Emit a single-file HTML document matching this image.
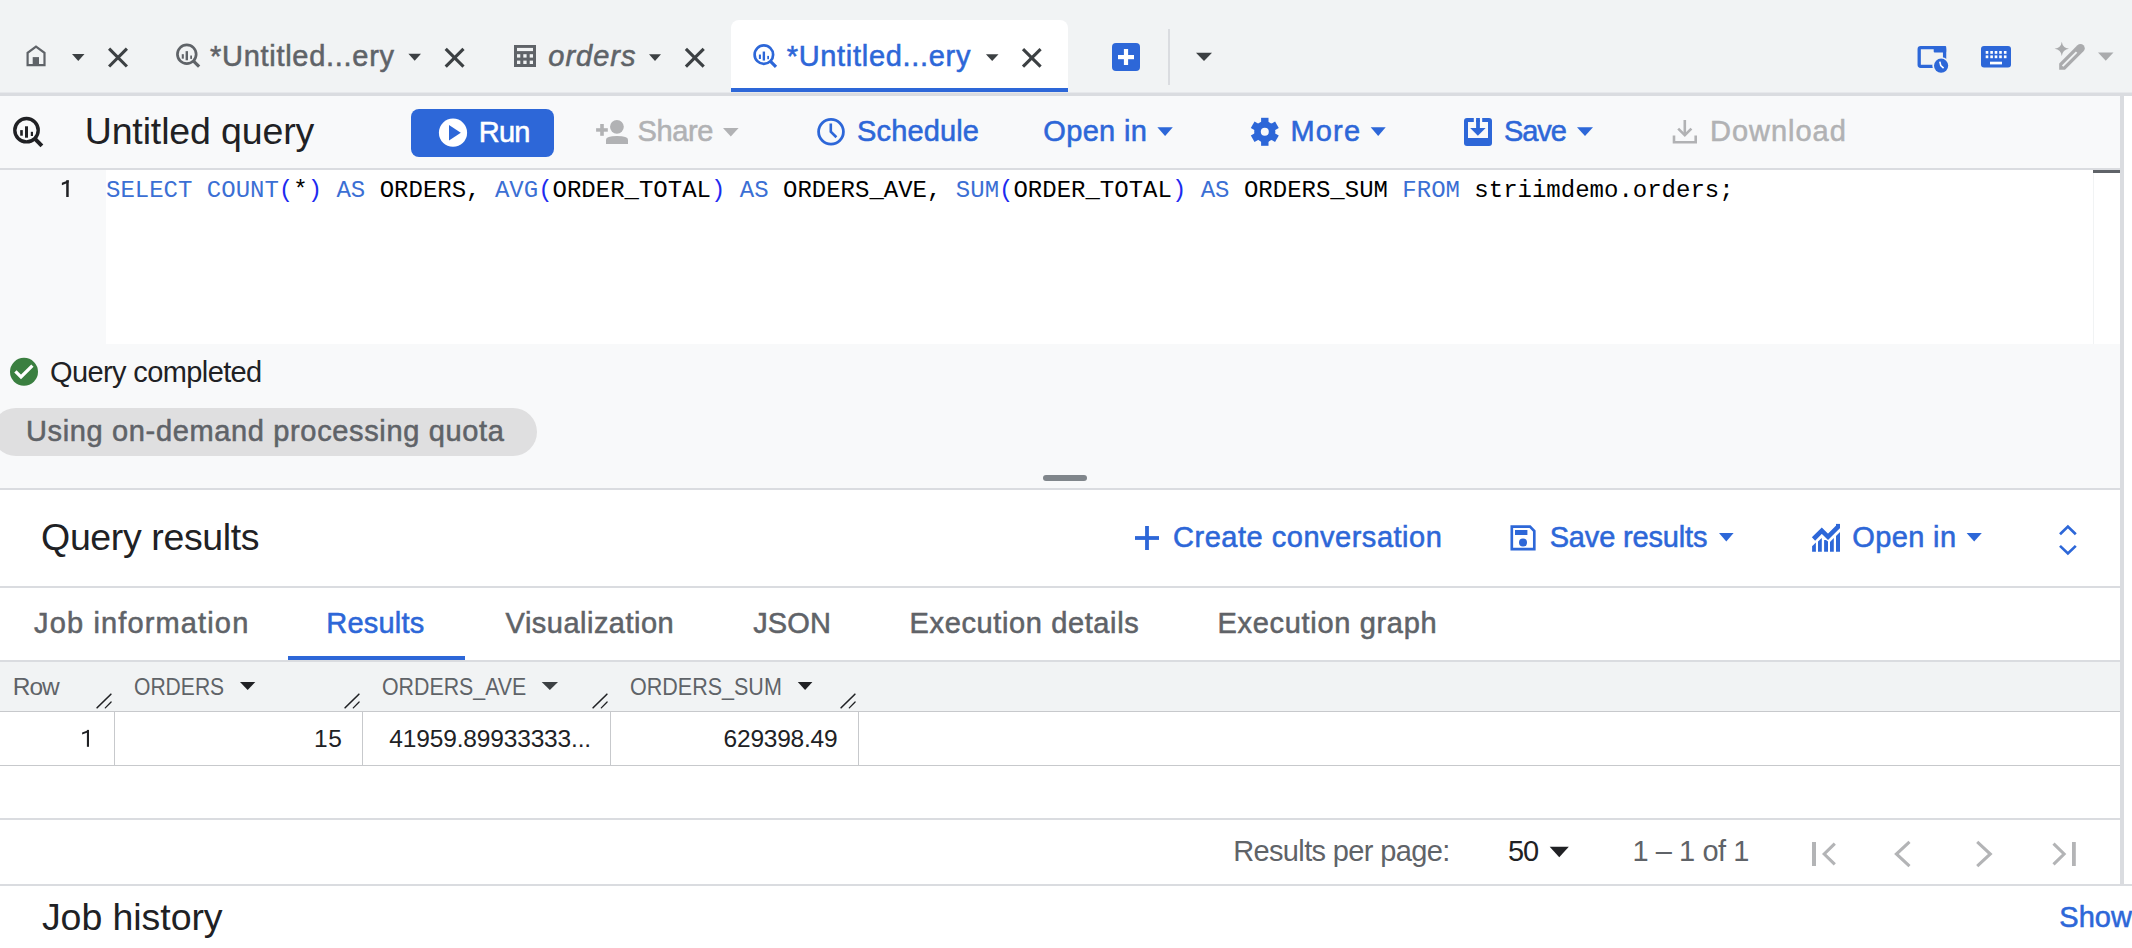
<!DOCTYPE html>
<html><head><meta charset="utf-8"><title>BigQuery</title>
<style>
html,body{margin:0;padding:0;width:2132px;height:948px;overflow:hidden;background:#fff;}
#root{position:relative;width:2132px;height:948px;overflow:hidden;}
#root>div,#root>span{position:absolute;}
#root>span{line-height:1;white-space:pre;}
</style></head><body><div id="root">
<div style="left:0px;top:0px;width:2132px;height:93px;background:#f1f3f4;"></div>
<div style="left:0px;top:92px;width:2132px;height:1px;background:#e6e8eb;"></div>
<div style="left:0px;top:93px;width:2132px;height:3px;background:#dadce0;"></div>
<div style="left:731px;top:20px;width:337px;height:68px;background:#ffffff;border-radius:8px 8px 0 0;"></div>
<div style="left:731px;top:88px;width:337px;height:4px;background:#2d67d8;"></div>
<div style="left:0px;top:96px;width:2120px;height:72px;background:#f8f9fa;"></div>
<div style="left:0px;top:168px;width:2120px;height:2px;background:#dadce0;"></div>
<div style="left:0px;top:170px;width:106px;height:174px;background:#f8f9fa;"></div>
<div style="left:106px;top:170px;width:2014px;height:174px;background:#ffffff;"></div>
<div style="left:2093px;top:170px;width:1px;height:174px;background:#f1f3f4;"></div>
<div style="left:2093px;top:170px;width:27px;height:3px;background:#5f6368;"></div>
<div style="left:0px;top:344px;width:2120px;height:144px;background:#f8f9fa;"></div>
<div style="left:-8px;top:408px;width:545px;height:48px;background:#dfdfe0;border-radius:24px;"></div>
<div style="left:1043px;top:475px;width:44px;height:6px;background:#80868b;border-radius:3px;"></div>
<div style="left:0px;top:488px;width:2120px;height:2px;background:#dadce0;"></div>
<div style="left:0px;top:490px;width:2120px;height:96px;background:#ffffff;"></div>
<div style="left:0px;top:586px;width:2120px;height:2px;background:#dadce0;"></div>
<div style="left:288px;top:656px;width:177px;height:4px;background:#2d67d8;"></div>
<div style="left:0px;top:660px;width:2120px;height:2px;background:#dadce0;"></div>
<div style="left:0px;top:662px;width:2120px;height:49px;background:#f1f3f4;"></div>
<div style="left:0px;top:711px;width:2120px;height:1px;background:#c7c9cc;"></div>
<div style="left:114px;top:712px;width:1px;height:53px;background:#c7c9cc;"></div>
<div style="left:362px;top:712px;width:1px;height:53px;background:#c7c9cc;"></div>
<div style="left:610px;top:712px;width:1px;height:53px;background:#c7c9cc;"></div>
<div style="left:858px;top:712px;width:1px;height:53px;background:#c7c9cc;"></div>
<div style="left:0px;top:765px;width:2120px;height:1px;background:#c7c9cc;"></div>
<div style="left:0px;top:818px;width:2120px;height:2px;background:#dadce0;"></div>
<div style="left:0px;top:884px;width:2132px;height:2px;background:#dadce0;"></div>
<div style="left:2120px;top:96px;width:4px;height:788px;background:#dadce0;"></div>
<svg width="2132" height="948" viewBox="0 0 2132 948" style="position:absolute;left:0;top:0"><g fill="none" stroke="#5f6368" stroke-width="2.2" stroke-linejoin="miter"><path d="M27.6,65.2 V52.8 L36,46.6 L44.5,52.8 V65.2 Z"/></g><rect x="32.7" y="57.1" width="6.3" height="8.2" fill="#5f6368"/><polygon points="72,54 84.5,54 78.25,61" fill="#3c4043"/><g stroke="#3c4043" stroke-width="3.1"><line x1="109.1" y1="48.7" x2="126.9" y2="66.5"/><line x1="126.9" y1="48.7" x2="109.1" y2="66.5"/></g><g transform="translate(176,43.7) scale(0.8)" fill="none" stroke="#5f6368"><circle cx="13.5" cy="13.2" r="11.7" stroke-width="3.4"/><line x1="21.3" y1="21.2" x2="28.9" y2="28.8" stroke-width="4"/><g stroke="none" fill="#5f6368"><rect x="12" y="9.3" width="3" height="11.4"/><rect x="7.2" y="13.1" width="2.6" height="5.6"/><rect x="17.8" y="14.8" width="2.2" height="4.2"/></g></g><polygon points="408.4,53.8 421,53.8 414.7,60.8" fill="#3c4043"/><g stroke="#3c4043" stroke-width="3.1"><line x1="445.70000000000005" y1="48.9" x2="463.5" y2="66.7"/><line x1="463.5" y1="48.9" x2="445.70000000000005" y2="66.7"/></g><rect x="514" y="45" width="22" height="22" fill="#5f6368"/><rect x="517" y="47.9" width="16" height="3.2" fill="#f1f3f4"/><rect x="517" y="54.2" width="3.3" height="3.4" fill="#f1f3f4"/><rect x="523.3" y="54.2" width="3.3" height="3.4" fill="#f1f3f4"/><rect x="529.7" y="54.2" width="3.3" height="3.4" fill="#f1f3f4"/><rect x="517" y="60.6" width="3.3" height="3.4" fill="#f1f3f4"/><rect x="523.3" y="60.6" width="3.3" height="3.4" fill="#f1f3f4"/><rect x="529.7" y="60.6" width="3.3" height="3.4" fill="#f1f3f4"/><polygon points="649,54.3 661,54.3 655.0,61" fill="#3c4043"/><g stroke="#3c4043" stroke-width="3.1"><line x1="685.9" y1="48.9" x2="703.6999999999999" y2="66.7"/><line x1="703.6999999999999" y1="48.9" x2="685.9" y2="66.7"/></g><g transform="translate(753.2,44.2) scale(0.79)" fill="none" stroke="#2d67d8"><circle cx="13.5" cy="13.2" r="11.7" stroke-width="3.4"/><line x1="21.3" y1="21.2" x2="28.9" y2="28.8" stroke-width="4"/><g stroke="none" fill="#2d67d8"><rect x="12" y="9.3" width="3" height="11.4"/><rect x="7.2" y="13.1" width="2.6" height="5.6"/><rect x="17.8" y="14.8" width="2.2" height="4.2"/></g></g><polygon points="985.9,54.3 998.5,54.3 992.2,61" fill="#3c4043"/><g stroke="#3c4043" stroke-width="3.1"><line x1="1023.0" y1="49.1" x2="1040.6000000000001" y2="66.7"/><line x1="1040.6000000000001" y1="49.1" x2="1023.0" y2="66.7"/></g><rect x="1112" y="43" width="28" height="28" rx="4" fill="#2d67d8"/><rect x="1118" y="55" width="16" height="4.2" fill="#fff"/><rect x="1123.9" y="49" width="4.2" height="16" fill="#fff"/><rect x="1168" y="29" width="2" height="56" fill="#dadce0"/><polygon points="1196,52.7 1212,52.7 1204.0,61" fill="#3c4043"/><rect x="1919.2" y="47.7" width="25.4" height="18.6" rx="1.5" fill="none" stroke="#2d67d8" stroke-width="3.3"/><rect x="1933.7" y="46.1" width="12.5" height="6.5" rx="1" fill="#2d67d8"/><circle cx="1941.1" cy="65.7" r="8.8" fill="#f1f3f4"/><circle cx="1941.1" cy="65.7" r="7.1" fill="#2d67d8"/><path d="M1939.8,61.6 L1940.8,65.6 L1943.6,68.2" fill="none" stroke="#fff" stroke-width="1.6"/><rect x="1981" y="46" width="30" height="21.5" rx="3" fill="#2d67d8"/><rect x="1985.7" y="51" width="2.6" height="2.8" fill="#fff"/><rect x="1990.3" y="51" width="2.6" height="2.8" fill="#fff"/><rect x="1994.7" y="51" width="2.6" height="2.8" fill="#fff"/><rect x="1999.2" y="51" width="2.6" height="2.8" fill="#fff"/><rect x="2003.9" y="51" width="2.6" height="2.8" fill="#fff"/><rect x="1985.7" y="55.4" width="2.6" height="2.8" fill="#fff"/><rect x="1990.3" y="55.4" width="2.6" height="2.8" fill="#fff"/><rect x="1994.7" y="55.4" width="2.6" height="2.8" fill="#fff"/><rect x="1999.2" y="55.4" width="2.6" height="2.8" fill="#fff"/><rect x="2003.9" y="55.4" width="2.6" height="2.8" fill="#fff"/><rect x="1990" y="61.7" width="12" height="2.7" fill="#fff"/><path d="M2061.8,41.8 Q2062.6,48 2069,48.8 Q2062.6,49.6 2061.8,56 Q2061,49.6 2054.6,48.8 Q2061,48 2061.8,41.8 Z" fill="#aaabad"/><path d="M2059.2,69.8 V63.4 L2077.4,45.2 A4.3,4.3 0 0 1 2083.5,51.3 L2065,69.8 Z" fill="#aaabad"/><line x1="2062.6" y1="66.1" x2="2076.6" y2="52.1" stroke="#f1f3f4" stroke-width="2"/><polygon points="2098,52.6 2113.5,52.6 2105.75,60.8" fill="#aaabad"/><g transform="translate(13,117) scale(1.0)" fill="none" stroke="#202124"><circle cx="13.5" cy="13.2" r="11.7" stroke-width="3.4"/><line x1="21.3" y1="21.2" x2="28.9" y2="28.8" stroke-width="4"/><g stroke="none" fill="#202124"><rect x="12" y="9.3" width="3" height="11.4"/><rect x="7.2" y="13.1" width="2.6" height="5.6"/><rect x="17.8" y="14.8" width="2.2" height="4.2"/></g></g><rect x="411" y="109" width="143" height="48" rx="8" fill="#2d67d8"/><circle cx="453" cy="132.7" r="14.1" fill="#fff"/><polygon points="449,125 449,140.6 460.8,132.8" fill="#2d67d8"/><g fill="#b1b2b4"><rect x="596.1" y="128.2" width="11.7" height="3.5"/><rect x="600.2" y="124" width="3.6" height="11.8"/><circle cx="616.9" cy="126.8" r="6.9"/><path d="M606,144 V139.5 Q606,136 617,136 Q628,136 628,139.5 V144 Z"/></g><polygon points="723,128 738.6,128 730.8,136.4" fill="#b1b2b4"/><g fill="none" stroke="#2d67d8" stroke-width="2.8"><circle cx="831" cy="131.8" r="12.4"/></g><path d="M830.8,123.5 V131.8 L836.4,137.2" fill="none" stroke="#2d67d8" stroke-width="2.6"/><polygon points="1157.4,127.3 1172.8,127.3 1165.1,136" fill="#2d67d8"/><g fill="#2d67d8"><circle cx="1264.8" cy="131.8" r="10.6"/><rect x="1261.1" y="117.80000000000001" width="7.4" height="14" transform="rotate(0 1264.8 131.8)"/><rect x="1261.1" y="117.80000000000001" width="7.4" height="14" transform="rotate(60 1264.8 131.8)"/><rect x="1261.1" y="117.80000000000001" width="7.4" height="14" transform="rotate(120 1264.8 131.8)"/><rect x="1261.1" y="117.80000000000001" width="7.4" height="14" transform="rotate(180 1264.8 131.8)"/><rect x="1261.1" y="117.80000000000001" width="7.4" height="14" transform="rotate(240 1264.8 131.8)"/><rect x="1261.1" y="117.80000000000001" width="7.4" height="14" transform="rotate(300 1264.8 131.8)"/></g><circle cx="1264.8" cy="131.8" r="4" fill="#f8f9fa"/><polygon points="1370.7,127.3 1385.7,127.3 1378.2,136" fill="#2d67d8"/><rect x="1464" y="118" width="28" height="28" rx="3" fill="#2d67d8"/><rect x="1468" y="122" width="20" height="16" fill="#f8f9fa"/><rect x="1473.8" y="118" width="2.3" height="4" fill="#f8f9fa"/><rect x="1479.9" y="118" width="2.3" height="4" fill="#f8f9fa"/><rect x="1476.1" y="120" width="3.8" height="9" fill="#2d67d8"/><polygon points="1470.2,128 1485.6,128 1477.9,135.8" fill="#2d67d8"/><polygon points="1577,127.3 1593,127.3 1585.0,136" fill="#2d67d8"/><g fill="none" stroke="#b1b2b4" stroke-width="2.6"><path d="M1684.8,120 V135"/><path d="M1678.2,128.6 L1684.8,135.2 L1691.4,128.6"/><path d="M1674,135.5 V142.3 H1695.7 V135.5"/></g><g fill="#202124"><rect x="66.2" y="180.2" width="2.5" height="16.8"/><polygon points="61.9,182.8 68.7,180.2 68.7,182.6 61.9,185.2"/><rect x="86.9" y="729.9" width="2.1" height="16.9"/><polygon points="82.1,732.4 88.9,729.9 88.9,732.1 82.1,734.5"/></g><circle cx="24" cy="371.8" r="14" fill="#3a7f40"/><polyline points="15.4,371.4 21,376.9 32.4,365.6" fill="none" stroke="#fff" stroke-width="3.3"/><rect x="1135" y="536.1" width="24" height="3.8" fill="#2d67d8"/><rect x="1145.1" y="526" width="3.8" height="24" fill="#2d67d8"/><path d="M1511.8,526.6 H1530 L1534.3,531 V549.1 H1511.8 Z" fill="none" stroke="#2d67d8" stroke-width="2.66"/><rect x="1515" y="530" width="12.4" height="5" fill="#2d67d8"/><circle cx="1523" cy="542.4" r="4" fill="#2d67d8"/><polygon points="1719,533 1733.6,533 1726.3,541.6" fill="#2d67d8"/><polyline points="1813.5,539 1821.8,530.7 1828,536.8 1838.5,526.3" fill="none" stroke="#2d67d8" stroke-width="4.6" stroke-linejoin="miter"/><polygon points="1836,523.9 1840,523.9 1840,528 1836,528" fill="#2d67d8"/><g fill="#2d67d8"><polygon points="1812.1,546.3 1815.9,542.5 1815.9,551.8 1812.1,551.8"/><polygon points="1818,541.6 1821.8,538 1821.8,551.8 1818,551.8"/><polygon points="1824.1,540 1826,540 1828,541.6 1828,551.8 1824.1,551.8"/><polygon points="1830,542 1833.8,538 1833.8,551.8 1830,551.8"/><polygon points="1836,536 1840,532.1 1840,551.8 1836,551.8"/></g><polygon points="1966.6,533 1981.8,533 1974.1999999999998,541.6" fill="#2d67d8"/><g fill="none" stroke="#2d67d8" stroke-width="2.7"><polyline points="2060,534.2 2067.9,526.6 2075.8,534.2"/><polyline points="2060,545.9 2067.9,553.5 2075.8,545.9"/></g><g stroke="#202124" stroke-linecap="round"><line x1="97.1" y1="707.8" x2="110.9" y2="694.2" stroke-width="1.6"/><line x1="105.3" y1="707.9" x2="111.1" y2="702" stroke-width="1.3"/></g><g stroke="#202124" stroke-linecap="round"><line x1="345.1" y1="707.8" x2="358.9" y2="694.2" stroke-width="1.6"/><line x1="353.3" y1="707.9" x2="359.1" y2="702" stroke-width="1.3"/></g><g stroke="#202124" stroke-linecap="round"><line x1="593.1" y1="707.8" x2="606.9" y2="694.2" stroke-width="1.6"/><line x1="601.3" y1="707.9" x2="607.1" y2="702" stroke-width="1.3"/></g><g stroke="#202124" stroke-linecap="round"><line x1="841.1" y1="707.8" x2="854.9" y2="694.2" stroke-width="1.6"/><line x1="849.3" y1="707.9" x2="855.1" y2="702" stroke-width="1.3"/></g><polygon points="240,682 255.3,682 247.65,690" fill="#202124"/><polygon points="541.7,682 558,682 549.85,690" fill="#3c4043"/><polygon points="797.8,682 812.4,682 805.0999999999999,690" fill="#202124"/><polygon points="1549.7,846.8 1568.8,846.8 1559.25,857.3" fill="#202124"/><g fill="none" stroke="#b3b4b6" stroke-width="3.1"><polyline points="1834.8,843.6 1824.2,854 1834.8,864.4"/><polyline points="1909.5,841.8 1896.4,854 1909.5,866.2"/><polyline points="1977.2,841.8 1990.3,854 1977.2,866.2"/><polyline points="2053.5,843.6 2064.1,854 2053.5,864.4"/></g><rect x="1812" y="842" width="4" height="24" fill="#b3b4b6"/><rect x="2072" y="842" width="3.8" height="24" fill="#b3b4b6"/></svg>
<span style="left:210.00px;top:42.05px;font-family:'Liberation Sans',sans-serif;font-size:29px;font-style:normal;color:#5f6368;letter-spacing:0.714px;-webkit-text-stroke:0.55px #5f6368;">*Untitled...ery</span>
<span style="left:548.30px;top:42.35px;font-family:'Liberation Sans',sans-serif;font-size:29px;font-style:italic;color:#5f6368;letter-spacing:1.0px;-webkit-text-stroke:0.55px #5f6368;">orders</span>
<span style="left:786.70px;top:42.35px;font-family:'Liberation Sans',sans-serif;font-size:29px;font-style:normal;color:#2d67d8;letter-spacing:0.693px;-webkit-text-stroke:0.55px #2d67d8;">*Untitled...ery</span>
<span style="left:84.70px;top:112.83px;font-family:'Liberation Sans',sans-serif;font-size:37.5px;font-style:normal;color:#202124;letter-spacing:-0.131px;">Untitled query</span>
<span style="left:478.70px;top:118.05px;font-family:'Liberation Sans',sans-serif;font-size:29px;font-style:normal;color:#ffffff;letter-spacing:-0.7px;-webkit-text-stroke:0.55px #ffffff;">Run</span>
<span style="left:637.50px;top:117.05px;font-family:'Liberation Sans',sans-serif;font-size:29px;font-style:normal;color:#b1b2b4;letter-spacing:-0.375px;-webkit-text-stroke:0.55px #b1b2b4;">Share</span>
<span style="left:857.00px;top:117.05px;font-family:'Liberation Sans',sans-serif;font-size:29px;font-style:normal;color:#2d67d8;letter-spacing:0.143px;-webkit-text-stroke:0.55px #2d67d8;">Schedule</span>
<span style="left:1043.30px;top:117.05px;font-family:'Liberation Sans',sans-serif;font-size:29px;font-style:normal;color:#2d67d8;letter-spacing:0.333px;-webkit-text-stroke:0.55px #2d67d8;">Open in</span>
<span style="left:1290.50px;top:117.05px;font-family:'Liberation Sans',sans-serif;font-size:29px;font-style:normal;color:#2d67d8;letter-spacing:1.167px;-webkit-text-stroke:0.55px #2d67d8;">More</span>
<span style="left:1503.90px;top:117.05px;font-family:'Liberation Sans',sans-serif;font-size:29px;font-style:normal;color:#2d67d8;letter-spacing:-1.0px;-webkit-text-stroke:0.55px #2d67d8;">Save</span>
<span style="left:1710.00px;top:117.45px;font-family:'Liberation Sans',sans-serif;font-size:29px;font-style:normal;color:#b1b2b4;letter-spacing:0.971px;-webkit-text-stroke:0.55px #b1b2b4;">Download</span>
<span style="left:50.00px;top:357.75px;font-family:'Liberation Sans',sans-serif;font-size:29px;font-style:normal;color:#202124;letter-spacing:-0.614px;">Query completed</span>
<span style="left:26.00px;top:417.05px;font-family:'Liberation Sans',sans-serif;font-size:29px;font-style:normal;color:#5f6368;letter-spacing:0.645px;-webkit-text-stroke:0.55px #5f6368;">Using on-demand processing quota</span>
<span style="left:41.10px;top:518.62px;font-family:'Liberation Sans',sans-serif;font-size:37.5px;font-style:normal;color:#202124;letter-spacing:-0.383px;">Query results</span>
<span style="left:1173.00px;top:523.45px;font-family:'Liberation Sans',sans-serif;font-size:29px;font-style:normal;color:#2d67d8;letter-spacing:0.517px;-webkit-text-stroke:0.55px #2d67d8;">Create conversation</span>
<span style="left:1549.70px;top:523.45px;font-family:'Liberation Sans',sans-serif;font-size:29px;font-style:normal;color:#2d67d8;letter-spacing:-0.164px;-webkit-text-stroke:0.55px #2d67d8;">Save results</span>
<span style="left:1852.20px;top:523.45px;font-family:'Liberation Sans',sans-serif;font-size:29px;font-style:normal;color:#2d67d8;letter-spacing:0.383px;-webkit-text-stroke:0.55px #2d67d8;">Open in</span>
<span style="left:34.00px;top:608.55px;font-family:'Liberation Sans',sans-serif;font-size:29px;font-style:normal;color:#5f6368;letter-spacing:1.143px;-webkit-text-stroke:0.55px #5f6368;">Job information</span>
<span style="left:326.30px;top:608.55px;font-family:'Liberation Sans',sans-serif;font-size:29px;font-style:normal;color:#2d67d8;letter-spacing:0.2px;-webkit-text-stroke:0.55px #2d67d8;">Results</span>
<span style="left:505.60px;top:608.55px;font-family:'Liberation Sans',sans-serif;font-size:29px;font-style:normal;color:#5f6368;letter-spacing:0.483px;-webkit-text-stroke:0.55px #5f6368;">Visualization</span>
<span style="left:753.20px;top:608.55px;font-family:'Liberation Sans',sans-serif;font-size:29px;font-style:normal;color:#5f6368;letter-spacing:0.1px;-webkit-text-stroke:0.55px #5f6368;">JSON</span>
<span style="left:909.60px;top:608.55px;font-family:'Liberation Sans',sans-serif;font-size:29px;font-style:normal;color:#5f6368;letter-spacing:0.619px;-webkit-text-stroke:0.55px #5f6368;">Execution details</span>
<span style="left:1217.60px;top:608.55px;font-family:'Liberation Sans',sans-serif;font-size:29px;font-style:normal;color:#5f6368;letter-spacing:0.671px;-webkit-text-stroke:0.55px #5f6368;">Execution graph</span>
<span style="left:12.80px;top:674.88px;font-family:'Liberation Sans',sans-serif;font-size:24.5px;font-style:normal;color:#5f6368;letter-spacing:-1.0px;">Row</span>
<span style="left:133.74px;top:674.88px;font-family:'Liberation Sans',sans-serif;font-size:24.5px;font-style:normal;color:#5f6368;letter-spacing:0px;transform:scaleX(0.8602);transform-origin:0 0;">ORDERS</span>
<span style="left:381.63px;top:674.88px;font-family:'Liberation Sans',sans-serif;font-size:24.5px;font-style:normal;color:#5f6368;letter-spacing:0px;transform:scaleX(0.8707);transform-origin:0 0;">ORDERS_AVE</span>
<span style="left:629.82px;top:674.88px;font-family:'Liberation Sans',sans-serif;font-size:24.5px;font-style:normal;color:#5f6368;letter-spacing:0px;transform:scaleX(0.8782);transform-origin:0 0;">ORDERS_SUM</span>
<span style="left:314.00px;top:727.08px;font-family:'Liberation Sans',sans-serif;font-size:24.5px;font-style:normal;color:#202124;letter-spacing:0.7px;">15</span>
<span style="left:389.30px;top:727.08px;font-family:'Liberation Sans',sans-serif;font-size:24.5px;font-style:normal;color:#202124;letter-spacing:-0.156px;">41959.89933333...</span>
<span style="left:723.60px;top:727.08px;font-family:'Liberation Sans',sans-serif;font-size:24.5px;font-style:normal;color:#202124;letter-spacing:-0.225px;">629398.49</span>
<span style="left:1233.20px;top:837.25px;font-family:'Liberation Sans',sans-serif;font-size:29px;font-style:normal;color:#5f6368;letter-spacing:-0.637px;">Results per page:</span>
<span style="left:1508.00px;top:837.25px;font-family:'Liberation Sans',sans-serif;font-size:29px;font-style:normal;color:#202124;letter-spacing:-1.2px;">50</span>
<span style="left:1632.50px;top:837.25px;font-family:'Liberation Sans',sans-serif;font-size:29px;font-style:normal;color:#5f6368;letter-spacing:-0.444px;">1 – 1 of 1</span>
<span style="left:41.90px;top:899.03px;font-family:'Liberation Sans',sans-serif;font-size:37.5px;font-style:normal;color:#202124;letter-spacing:-0.06px;">Job history</span>
<span style="left:2059.30px;top:902.75px;font-family:'Liberation Sans',sans-serif;font-size:29px;font-style:normal;color:#2d67d8;letter-spacing:0px;-webkit-text-stroke:0.55px #2d67d8;">Show</span>
<span style="left:106px;top:179.06px;font-family:'Liberation Mono',monospace;font-size:24px;letter-spacing:0px;color:#000"><b style="color:#3b6fd4;font-weight:400">SELECT</b><b style="color:#000000;font-weight:400"> </b><b style="color:#3b6fd4;font-weight:400">COUNT</b><b style="color:#1d2bf0;font-weight:400">(</b><b style="color:#000000;font-weight:400">*</b><b style="color:#1d2bf0;font-weight:400">)</b><b style="color:#000000;font-weight:400"> </b><b style="color:#3b6fd4;font-weight:400">AS</b><b style="color:#000000;font-weight:400"> ORDERS, </b><b style="color:#3b6fd4;font-weight:400">AVG</b><b style="color:#1d2bf0;font-weight:400">(</b><b style="color:#000000;font-weight:400">ORDER_TOTAL</b><b style="color:#1d2bf0;font-weight:400">)</b><b style="color:#000000;font-weight:400"> </b><b style="color:#3b6fd4;font-weight:400">AS</b><b style="color:#000000;font-weight:400"> ORDERS_AVE, </b><b style="color:#3b6fd4;font-weight:400">SUM</b><b style="color:#1d2bf0;font-weight:400">(</b><b style="color:#000000;font-weight:400">ORDER_TOTAL</b><b style="color:#1d2bf0;font-weight:400">)</b><b style="color:#000000;font-weight:400"> </b><b style="color:#3b6fd4;font-weight:400">AS</b><b style="color:#000000;font-weight:400"> ORDERS_SUM </b><b style="color:#3b6fd4;font-weight:400">FROM</b><b style="color:#000000;font-weight:400"> striimdemo.orders;</b></span>
</div></body></html>
